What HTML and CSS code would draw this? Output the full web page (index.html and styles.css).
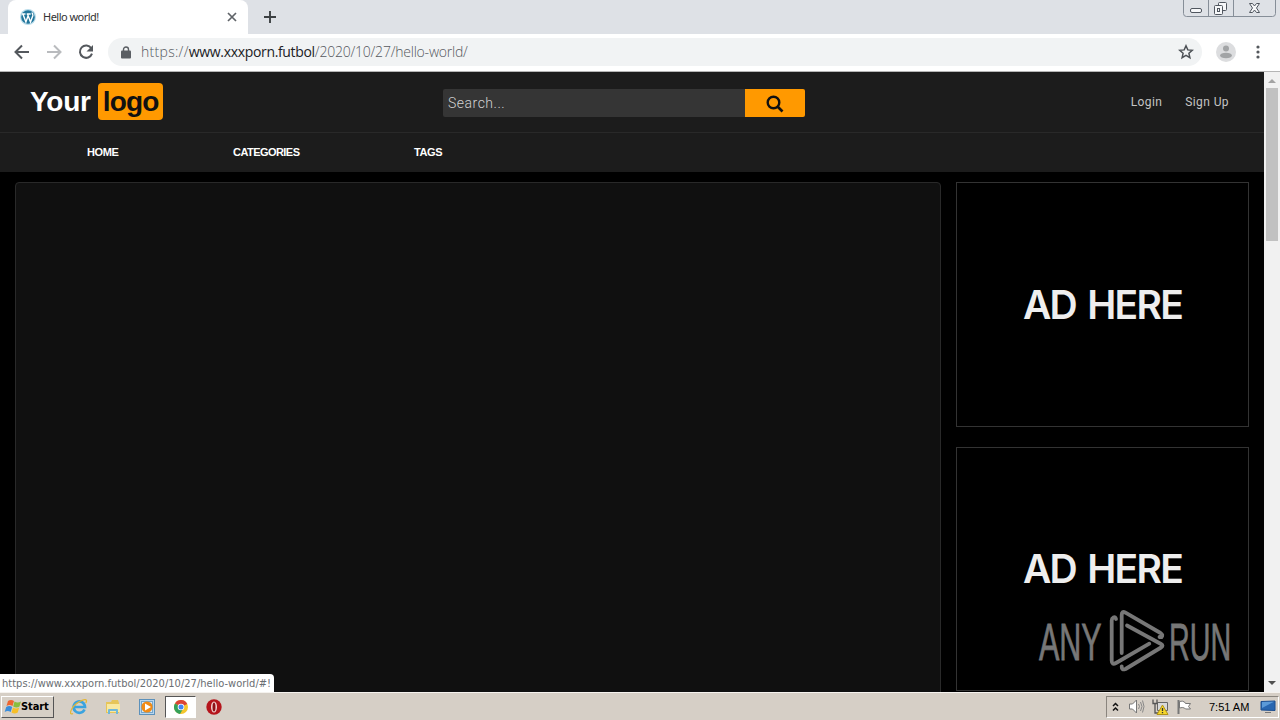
FILE: index.html
```html
<!DOCTYPE html>
<html>
<head>
    <meta charset="utf-8">
    <title>Hello world!</title>
    <link rel="stylesheet" href="styles.css">
</head>
<body>
<div class="screen">
    <div class="tabs">
        <div class="tab-left"></div>
        <div class="tab">
            <svg class="favicon" width="16" height="16" viewBox="0 0 16 16"><circle cx="8" cy="8" r="8" fill="#b9dcea"/><circle cx="8" cy="8" r="6.8" fill="#21759b"/><path d="M2 5h3.5M6.7 5h4M2.900 5l3 8 2.200-6.200M7.500 5l3 8 2.300-6.200c.4-1.500-.9-2.200-.5-3.300" fill="none" stroke="#fff" stroke-width="1.400"/></svg>
            <span class="tab-title">Hello world!</span>
            <svg class="tab-close" width="10" height="10" viewBox="0 0 10 10"><path d="M1 1l8 8M9 1L1 9" stroke="#5f6368" stroke-width="1.700"/></svg>
        </div>
        <div class="new-tab">
            <svg width="12" height="12" viewBox="0 0 12 12"><path d="M6 0v12M0 6h12" stroke="#3c4043" stroke-width="1.900"/></svg>
        </div>
        <div class="win-buttons">
            <svg width="94" height="17" viewBox="0 0 94 17"><path d="M.5 0v13.500q0 3 3 3h86q3 0 3-3V0M25.500 0v16M50.500 0v16" fill="none" stroke="#868e98"/><g fill="#f6f7f9" stroke="#50565f"><rect x="7.500" y="8.500" width="11" height="4" rx="1.500"/><rect x="35.500" y="2.500" width="8" height="8" rx="1"/><rect x="31.500" y="5.500" width="8" height="9" rx="1"/><rect x="34.500" y="8.500" width="2" height="3"/><path d="M66.500 3.500h3l2 2.500 2-2.500h3l-3 4.500 3 4.500h-3l-2-2.500-2 2.500h-3l3-4.500z"/></g></svg>
        </div>
    </div>
    <div class="toolbar">
        <svg class="nav-icon" width="16" height="16" viewBox="0 0 16 16"><path d="M15 8H2M8 1.500L1.500 8 8 14.500" fill="none" stroke="#54585d" stroke-width="2"/></svg>
        <svg class="nav-icon" width="16" height="16" viewBox="0 0 16 16"><path d="M1 8h13M8 1.500L14.500 8 8 14.500" fill="none" stroke="#b9bbbe" stroke-width="2"/></svg>
        <svg class="nav-icon" width="16" height="16" viewBox="0 0 16 16"><path d="M13.300 4.200A6.200 6.200 0 1 0 14 9.700" fill="none" stroke="#54585d" stroke-width="2"/><path d="M15 1v6.500H8.500z" fill="#54585d"/></svg>
        <div class="address">
            <svg class="lock" width="10" height="13" viewBox="0 0 10 13"><rect x="0" y="4.500" width="10" height="8" rx="1" fill="#5a5e63"/><path d="M2.500 5V3.500a2.500 2.500 0 0 1 5 0V5" fill="none" stroke="#5a5e63" stroke-width="1.400"/></svg>
            <div class="url"><span>https://</span><b>www.xxxporn.futbol</b>/2020/10/27/hello-world/</div>
            <svg class="star" width="16" height="16" viewBox="0 0 16 16"><path d="M8 1.800l1.800 4.100 4.500.4-3.400 3 1 4.400L8 11.400l-3.900 2.300 1-4.400-3.400-3 4.500-.4z" fill="none" stroke="#4d5156" stroke-width="1.500"/></svg>
        </div>
        <svg class="avatar" width="20" height="20" viewBox="0 0 20 20"><circle cx="10" cy="10" r="10" fill="#dcdddf"/><circle cx="10" cy="6.500" r="3" fill="#a2a4a6"/><ellipse cx="10" cy="13.500" rx="6" ry="2.800" fill="#a2a4a6"/></svg>
        <svg class="dots" width="4" height="14" viewBox="0 0 4 14"><g fill="#54585d"><circle cx="2" cy="2" r="1.600"/><circle cx="2" cy="7" r="1.600"/><circle cx="2" cy="12" r="1.600"/></g></svg>
    </div>
    <div class="viewport">
        <div class="page">
            <div class="header">
                <div class="logo">Your <span>logo</span></div>
                <div class="search">
                    <div class="search-input">Search...</div>
                    <div class="search-button"><svg width="18" height="18" viewBox="0 0 18 18"><circle cx="7.500" cy="7.500" r="5.800" fill="none" stroke="#111" stroke-width="2.400"/><path d="M11.500 11.500l5 5" stroke="#111" stroke-width="2.600"/></svg></div>
                </div>
                <div class="account"><a class="login">Login</a><a class="signup">Sign Up</a></div>
            </div>
            <div class="menu">
                <a class="home">HOME</a>
                <a class="categories">CATEGORIES</a>
                <a class="tags">TAGS</a>
            </div>
            <div class="main">
                <div class="player"></div>
                <div class="sidebar">
                    <div class="ad"><span>AD HERE</span></div>
                    <div class="ad"><span>AD HERE</span></div>
                </div>
            </div>
        </div>
        <div class="scrollbar">
            <svg width="16" height="16" viewBox="0 0 16 16"><path d="M4 11l4-4 4 4z" fill="#a3a3a3"/></svg>
            <div class="thumb"></div>
            <svg class="down" width="16" height="16" viewBox="0 0 16 16"><path d="M4 5h8l-4 4z" fill="#505050"/></svg>
        </div>
        <div class="status">https://www.xxxporn.futbol/2020/10/27/hello-world/#!</div>
        <svg class="watermark" width="196" height="66" viewBox="0 0 196 66">
            <g class="watermark-text"><text transform="translate(2 50.500) scale(.56 1)" textLength="112" lengthAdjust="spacingAndGlyphs">ANY</text><text transform="translate(132 50.500) scale(.56 1)" textLength="111" lengthAdjust="spacingAndGlyphs">RUN</text></g>
            <g class="watermark-mark"><path d="M79 10Q78.500 7.500 76.500 8.500 74.700 9.500 74.700 11.500V51.500Q74.700 56.500 79 54L112.300 34.700"/><path d="M84.700 44V6Q84.700 1.500 88.500 3.700L123.500 24Q126.500 26 124.500 28.200L122.500 28"/><path d="M90 16.500L124 35Q127 36.700 124 38.500L88.500 60Q84.500 61.500 84.700 57.500"/></g>
        </svg>
    </div>
    <div class="taskbar">
        <div class="start">
            <svg width="18" height="16" viewBox="0 0 18 16"><path d="M4 2q3-2 6 0L8.500 7q-3-2-6 0z" fill="#ee6631"/><path d="M10.500 2.500q3 2 6.500 0L15.500 7.500q-3 2-6.300 0z" fill="#8abe3e"/><path d="M2.200 8q3-2 6 0l-1.500 5q-3-2-6 0z" fill="#3a8ddb"/><path d="M9 8.500q3 2 6.200 0l-1.500 5q-3 2-6.200 0z" fill="#f7bf28"/></svg>
            <span>Start</span>
        </div>
        <svg class="task-icon ie" width="18" height="18" viewBox="0 0 18 18"><path d="M14.500 11.500A5.700 5.700 0 1 1 15 9H5" fill="none" stroke="#3aa3df" stroke-width="2.700"/><path d="M3 15.500C-2 18 1 9 8 4.500S18 1 15.800 5" fill="none" stroke="#e5b735" stroke-width="1.300"/></svg>
        <svg class="task-icon folder" width="16" height="16" viewBox="0 0 16 16"><path d="M1 3h5l1-2h6l1 3v10H1z" fill="#e6c559"/><path d="M2 5h13v8H2z" fill="#f8e8a0"/><path d="M3 15v-4q0-1 1-1h8q1 0 1 1v4h-2v-3H5v3z" fill="#70b8d8"/></svg>
        <svg class="task-icon media" width="16" height="16" viewBox="0 0 16 16"><rect x=".5" y=".5" width="15" height="15" fill="#b8d6ee" stroke="#5c91bb"/><rect x="2.500" y="2.500" width="11" height="11" fill="#d8e9f6" stroke="#75a6cb"/><circle cx="8" cy="8" r="5.600" fill="#f18b16"/><path d="M6 4.500v7L12 8z" fill="#fff"/></svg>
        <div class="task-active"><svg width="14" height="14" viewBox="0 0 14 14"><circle cx="7" cy="7" r="7" fill="#f4c62d"/><path d="M7 7L1 3.400A7 7 0 0 1 13.200 4z" fill="#db4437"/><path d="M7 7L1 3.400A7 7 0 0 0 6 14l3-5z" fill="#35a15a"/><circle cx="7" cy="7" r="3.300" fill="#fff"/><circle cx="7" cy="7" r="2.500" fill="#4285f4"/></svg></div>
        <svg class="task-icon opera" width="16" height="16" viewBox="0 0 16 16"><circle cx="8" cy="8" r="7.700" fill="#b5151c"/><ellipse cx="8" cy="8" rx="3" ry="5.500" fill="#f4d8d7"/><ellipse cx="8" cy="8" rx="1.500" ry="4.600" fill="#8e1016"/></svg>
        <div class="tray">
            <svg class="chevrons" width="7" height="10" viewBox="0 0 7 10"><path d="M1 4l2.500-2.500L6 4M1 8.500L3.500 6 6 8.500" fill="none" stroke="#111" stroke-width="1.500"/></svg>
            <svg class="speaker" width="17" height="15" viewBox="0 0 17 15"><path d="M1.500 5h3l4-4v13l-4-4h-3z" fill="#fff" stroke="#777"/><path d="M10.500 5q2 2.500 0 5M12.500 3q3 4.500 0 9M14.500 1.500q3 6 0 12" fill="none" stroke="#888"/></svg>
            <svg class="network" width="17" height="16" viewBox="0 0 17 16"><path d="M5.500 3.500h10v8h-10z" fill="#d9d9d9" stroke="#666"/><path d="M1 .5v4h4v-4M3 4v10h5" fill="none" stroke="#555" stroke-width="1.300"/><path d="M10.500 6l5.500 9.500H5z" fill="#f5d62b" stroke="#b29316"/><path d="M10.500 9v3M10.500 13v1.200" stroke="#333" stroke-width="1.300"/></svg>
            <svg class="flag" width="17" height="16" viewBox="0 0 17 16"><path d="M2.500 1v14" stroke="#777" stroke-width="2"/><path d="M3.500 2.500q3-1 5 .5l1 1.500h5l-2 3 2 2.500h-5l-1-1q-2-1-5 0z" fill="#fff" stroke="#777"/></svg>
            <span class="clock">7:51 AM</span>
            <svg class="desktop" width="16" height="14" viewBox="0 0 16 14"><path d="M1 1.500l14-.5v9.500L1 10z" fill="#2866b0" stroke="#1d4e8e"/><path d="M2 2l12-.3Q8 5 2 8z" fill="#5b9ad8"/><path d="M5 12h6v1H5z" fill="#777"/></svg>
        </div>
    </div>
</div>
</body>
</html>
```
FILE: styles.css
```css
html,body{
    padding: 0;
    margin: 0;
}
*{
    box-sizing: border-box;
}
svg{
    display: block;
    flex-shrink: 0;
}
.screen{
    width: 1280px;
    height: 720px;
    display: flex;
    flex-direction: column;
    overflow: hidden;
    background: #000;
    font-family: "Liberation Sans", Arial, sans-serif;
}

/* browser */
.tabs{
    height: 34px;
    display: flex;
    background: #dee1e6;
}
.tab-left{
    width: 8px;
}
.tab{
    width: 240px;
    height: 34px;
    display: flex;
    align-items: center;
    padding: 0 11px 0 12px;
    border-radius: 8px 8px 0 0;
    background: #fff;
}
.tab-title{
    margin-left: 7px;
    font: 11px/16px "Noto Sans", sans-serif;
    letter-spacing: -0.52px;
    color: #333;
}
.tab-close{
    margin-left: auto;
}
.new-tab{
    padding: 11px 0 0 16px;
}
.win-buttons{
    margin-left: auto;
    margin-right: 3px;
}
.toolbar{
    height: 38px;
    display: flex;
    align-items: center;
    padding: 0 20px 1px 14px;
    border-bottom: 1px solid #b5b5b5;
    background: #fff;
}
.nav-icon{
    margin-right: 16px;
}
.address{
    width: 1094px;
    height: 28px;
    margin-left: -2px;
    margin-right: 14px;
    display: flex;
    align-items: center;
    padding: 0 8px 0 13px;
    border-radius: 14px;
    background: #f1f3f4;
}
.url{
    margin-left: 10px;
    font: 300 14px/20px "Open Sans", "Noto Sans", sans-serif;
    letter-spacing: -0.22px;
    color: #55595e;
    white-space: nowrap;
}
.url span{
    letter-spacing: 0.3px;
}
.url b{
    font-weight: 400;
    letter-spacing: -0.33px;
    color: #202124;
}
.star{
    margin-left: auto;
}
.dots{
    margin-left: auto;
}

/* page */
.viewport{
    position: relative;
    height: 620px;
    display: flex;
}
.page{
    width: 1264px;
    background: #000;
}
.header{
    height: 60px;
    display: flex;
    background: #1c1c1c;
}
.logo{
    width: 443px;
    padding: 11px 0 0 30px;
    font-size: 28px;
    line-height: 37px;
    font-weight: bold;
    letter-spacing: -0.25px;
    color: #fff;
    white-space: nowrap;
}
.logo span{
    display: inline-block;
    width: 65px;
    height: 37px;
    text-align: center;
    letter-spacing: -0.8px;
    border-radius: 4px;
    background: #ff9900;
    color: #111;
}
.search{
    width: 362px;
    height: 28px;
    margin-top: 17px;
    display: flex;
}
.search-input{
    width: 302px;
    padding-left: 5px;
    border-radius: 2px 0 0 2px;
    background: #353535;
    font: 300 14px/28px Roboto, sans-serif;
    letter-spacing: 0.5px;
    color: #d2d2d2;
}
.search-button{
    width: 60px;
    padding: 6px 0 0 21px;
    border-radius: 0 2px 2px 0;
    background: #ff9900;
}
.account{
    margin-left: auto;
    padding: 21px 35px 0 0;
    display: flex;
    gap: 23px;
    font: 12px/18px Roboto, sans-serif;
    letter-spacing: 0.4px;
    color: #c4c4c4;
}
.menu{
    height: 40px;
    display: flex;
    padding-left: 87px;
    border-top: 1px solid #292929;
    background: #1c1c1c;
    font-size: 11px;
    line-height: 38px;
    font-weight: bold;
    letter-spacing: -0.4px;
    color: #fff;
}
.home{
    width: 146px;
}
.categories{
    width: 181px;
    letter-spacing: -0.55px;
}
.main{
    height: 520px;
    display: flex;
    gap: 15px;
    padding: 10px 15px 0;
    overflow: hidden;
}
.player{
    width: 926px;
    height: 540px;
    border: 1px solid #292929;
    border-radius: 4px 4px 0 0;
    background: #101010;
}
.sidebar{
    width: 293px;
    display: flex;
    flex-direction: column;
    gap: 20px;
}
.ad{
    height: 245px;
    flex-shrink: 0;
    display: flex;
    align-items: center;
    justify-content: center;
    border: 1px solid #333;
    font: 600 39px/40px Inter, sans-serif;
    letter-spacing: -1.7px;
    word-spacing: 3px;
    color: #eee;
}
.ad + .ad{
    height: 244px;
}
.scrollbar{
    width: 16px;
    display: flex;
    flex-direction: column;
    background: #f1f1f1;
}
.thumb{
    width: 12px;
    height: 153px;
    margin-left: 2px;
    background: #c1c1c1;
}
.down{
    margin-top: auto;
}
.status{
    position: absolute;
    left: 0;
    bottom: 0;
    width: 274px;
    height: 18px;
    padding-left: 2px;
    border-radius: 0 4px 0 0;
    background: #fff;
    font: 11px/19px "DejaVu Sans Condensed", "DejaVu Sans", sans-serif;
    letter-spacing: 0.02px;
    color: #6a6e72;
    white-space: nowrap;
}
.watermark{
    position: absolute;
    left: 1037px;
    top: 537px;
}
.watermark-text{
    font: 52px "Liberation Sans", sans-serif;
    fill: #777;
    stroke: #777;
    stroke-width: 0.8;
}
.watermark-mark{
    fill: none;
    stroke: #777;
    stroke-width: 3.8;
    stroke-linecap: round;
    stroke-linejoin: round;
}

/* taskbar */
.taskbar{
    height: 28px;
    display: flex;
    align-items: center;
    padding-left: 1px;
    border-top: 1px solid #f5f2ee;
    background: #d6cfc6;
}
.start{
    width: 53px;
    height: 22px;
    display: flex;
    align-items: center;
    padding-left: 2px;
    border: 1px solid;
    border-color: #fff #555 #555 #fff;
    font: bold 11px/18px "DejaVu Sans Condensed", "DejaVu Sans", sans-serif;
    letter-spacing: -0.1px;
    color: #000;
}
.start span{
    margin-left: -1px;
}
.ie{
    margin-left: 16px;
}
.folder{
    margin-left: 17px;
}
.media{
    margin-left: 18px;
}
.task-active{
    width: 31px;
    height: 22px;
    margin-left: 10px;
    padding: 3px 0 0 8px;
    border: 1px solid;
    border-color: #555 #fff #fff #555;
    background: #fff;
}
.opera{
    margin-left: 10px;
}
.tray{
    width: 173px;
    height: 22px;
    margin-left: auto;
    margin-right: 1px;
    display: flex;
    align-items: center;
    padding-left: 5px;
    border: 1px solid;
    border-color: #8a857e #fff #fff #8a857e;
}
.speaker{
    margin-left: 9px;
}
.network{
    margin-left: 7px;
}
.flag{
    margin-left: 7px;
}
.clock{
    width: 51px;
    margin-left: 16px;
    font: 11px/18px "Liberation Sans", sans-serif;
    color: #000;
    white-space: nowrap;
}
```
